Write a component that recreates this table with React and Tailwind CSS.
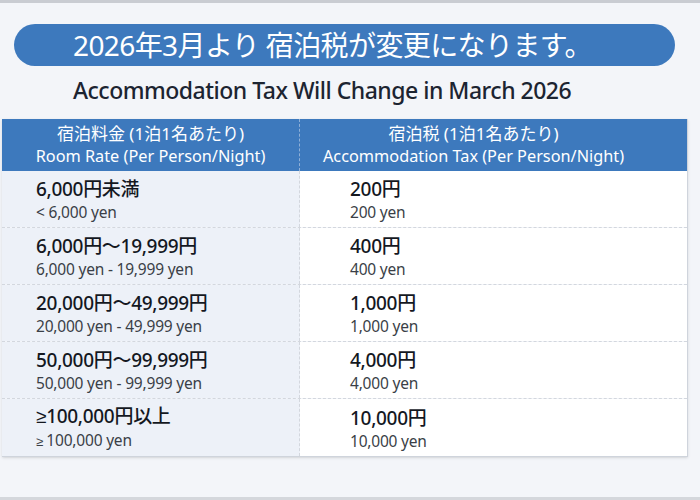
const rows = [
  { rate: '6,000円未満', rateEn: '< 6,000 yen', tax: '200円', taxEn: '200 yen' },
  { rate: '6,000円～19,999円', rateEn: '6,000 yen - 19,999 yen', tax: '400円', taxEn: '400 yen' },
  { rate: '20,000円～49,999円', rateEn: '20,000 yen - 49,999 yen', tax: '1,000円', taxEn: '1,000 yen' },
  { rate: '50,000円～99,999円', rateEn: '50,000 yen - 99,999 yen', tax: '4,000円', taxEn: '4,000 yen' },
  { rate: '100,000円以上', rateEn: '100,000 yen', tax: '10,000円', taxEn: '10,000 yen', ge: true },
]

const font = { fontFamily: '"Noto Sans", "Noto Sans CJK JP", sans-serif' }
const geFont = { fontFamily: '"Liberation Sans", sans-serif' }

export default function App() {
  return (
    <div
      className="w-[700px] h-[500px] overflow-hidden bg-[#f3f5f9] flex flex-col border-t-[3px] border-[#c9ccd2] border-b-[3px] border-b-[#d4d7dc]"
      style={font}
    >
      {/* ── Banner ── */}
      <div className="mt-[21px] ml-[14px] w-[661px] h-[42px] rounded-full bg-[#3d79bd] flex items-center pl-[59px]">
        <h1 className="text-[28px] leading-none text-white tracking-[-0.6px]">
          2026年3月より 宿泊税が変更になります。
        </h1>
      </div>
      <p className="mt-[10px] ml-[73px] text-[23px] leading-[28px] text-[#1c2431] tracking-[-0.5px] font-medium">
        Accommodation Tax Will Change in March 2026
      </p>

      {/* ── Table ── */}
      <div className="mt-[15px] ml-[2px] w-[686px] border-r border-b border-[#cfd4dc] shadow-sm">
        <div className="flex h-[52px] bg-[#3d79bd] text-white">
          <div className="w-[298px] flex flex-col items-center justify-center border-r border-dashed border-[#8fb0d8]">
            <span className="text-[17px] leading-[23px]">宿泊料金 (1泊1名あたり)</span>
            <span className="text-[16.3px] leading-[23px]">Room Rate (Per Person/Night)</span>
          </div>
          <div className="flex-1 flex flex-col items-center justify-center pr-[40px]">
            <span className="text-[17px] leading-[23px]">宿泊税 (1泊1名あたり)</span>
            <span className="text-[16.3px] leading-[23px]">Accommodation Tax (Per Person/Night)</span>
          </div>
        </div>
        {rows.map((r, i) => (
          <div
            key={r.rate}
            className={`flex h-[57px] ${i < rows.length - 1 ? 'border-b border-dashed border-[#d3d7de]' : ''}`}
          >
            <div className="w-[298px] bg-[#edf1f8] border-r border-dashed border-[#d3d7de] pl-[34px] flex flex-col justify-center">
              <span className="text-[19px] leading-[26px] text-[#14181f] tracking-[-0.3px] font-medium">
                {r.ge && <span style={geFont}>≥</span>}
                {r.rate}
              </span>
              <span className="text-[15.5px] leading-[20px] text-[#3a3f47] tracking-[-0.2px]">
                {r.ge && <span style={geFont} className="text-[13px]">≥ </span>}
                {r.rateEn}
              </span>
            </div>
            <div className="flex-1 bg-white pl-[50px] flex flex-col justify-center">
              <span className="text-[19px] leading-[26px] text-[#14181f] tracking-[-0.3px] font-medium">{r.tax}</span>
              <span className="text-[15.5px] leading-[20px] text-[#3a3f47] tracking-[-0.2px]">{r.taxEn}</span>
            </div>
          </div>
        ))}
      </div>
    </div>
  )
}
